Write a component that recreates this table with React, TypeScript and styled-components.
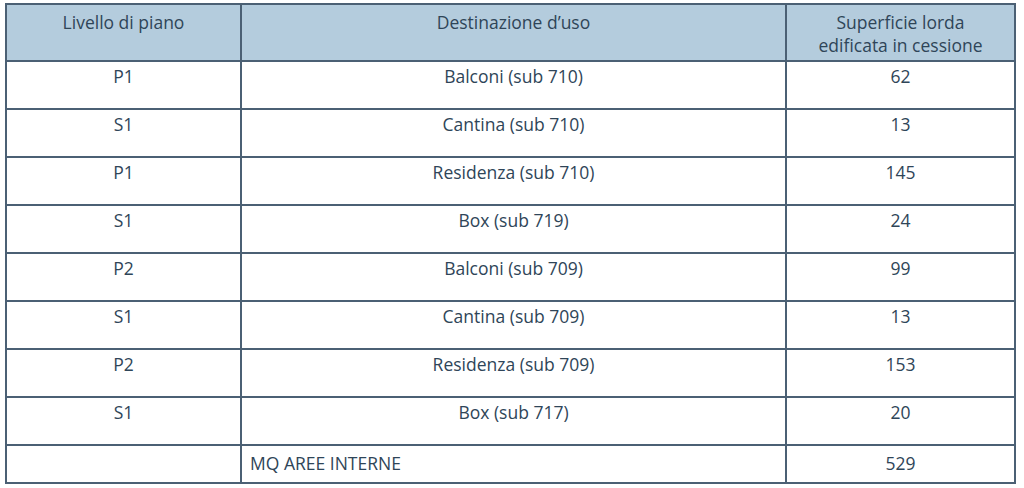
import React from "react"
import styled, { createGlobalStyle } from "styled-components"

const GlobalStyle = createGlobalStyle`
  html, body {
    margin: 0;
    padding: 0;
    background: #ffffff;
  }
`

const line = "#4b6074"
const ink = "#2f4558"

const Page = styled.div`
  padding: 3px 8px 0 5px;
  font-family: "Open Sans", "Noto Sans", sans-serif;
  color: ${ink};
`

const Table = styled.table`
  width: 1011px;
  border-collapse: collapse;
  table-layout: fixed;
  font-size: 17.5px;
  font-weight: 500;
  border: 2px solid ${line};
`

const HeadCell = styled.th`
  background: #b4ccdd;
  font-weight: 500;
  height: 57px;
  padding: 6px 4px 0;
  vertical-align: top;
  line-height: 23px;
  border: 2px solid ${line};
  box-sizing: border-box;
`

const Cell = styled.td<{ $left?: boolean; $last?: boolean }>`
  height: ${(p) => (p.$last ? 38 : 48)}px;
  box-sizing: border-box;
  padding: ${(p) => (p.$last ? "5px" : "2px")} ${(p) => (p.$left ? "8px" : "4px")} 0;
  vertical-align: top;
  text-align: ${(p) => (p.$left ? "left" : "center")};
  line-height: 24px;
  border: 2px solid ${line};
`

const rows = [
  ["P1", "Balconi (sub 710)", "62"],
  ["S1", "Cantina (sub 710)", "13"],
  ["P1", "Residenza (sub 710)", "145"],
  ["S1", "Box (sub 719)", "24"],
  ["P2", "Balconi (sub 709)", "99"],
  ["S1", "Cantina (sub 709)", "13"],
  ["P2", "Residenza (sub 709)", "153"],
  ["S1", "Box (sub 717)", "20"],
]

export default function App() {
  return (
    <Page>
      <GlobalStyle />
      <Table>
        <colgroup>
          <col style={{ width: 235 }} />
          <col style={{ width: 545 }} />
          <col />
        </colgroup>
        <thead>
          <tr>
            <HeadCell>Livello di piano</HeadCell>
            <HeadCell>Destinazione d’uso</HeadCell>
            <HeadCell>
              Superficie lorda
              <br />
              edificata in cessione
            </HeadCell>
          </tr>
        </thead>
        <tbody>
          {rows.map((r, i) => (
            <tr key={i}>
              <Cell>{r[0]}</Cell>
              <Cell>{r[1]}</Cell>
              <Cell>{r[2]}</Cell>
            </tr>
          ))}
          <tr>
            <Cell $last />
            <Cell $last $left>
              MQ AREE INTERNE
            </Cell>
            <Cell $last>529</Cell>
          </tr>
        </tbody>
      </Table>
    </Page>
  )
}
